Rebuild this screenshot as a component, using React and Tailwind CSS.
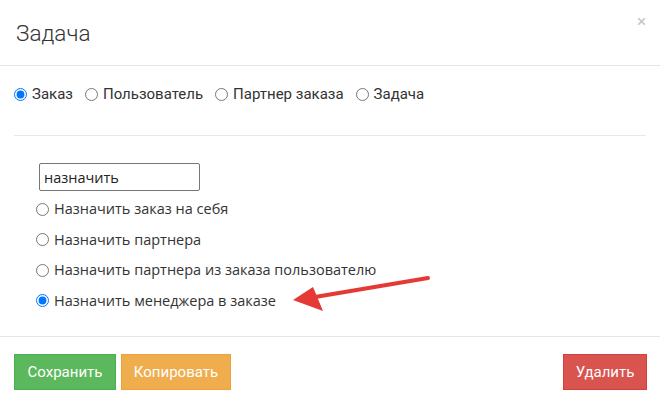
import { useState } from 'react';

const topOptions = ['Заказ', 'Пользователь', 'Партнер заказа', 'Задача'];
const actions = [
  'Назначить заказ на себя',
  'Назначить партнера',
  'Назначить партнера из заказа пользователю',
  'Назначить менеджера в заказе',
];

const App = () => {
  const [target, setTarget] = useState(0);
  const [action, setAction] = useState(3);
  const [text, setText] = useState('назначить');

  return (
    <div className="relative w-[660px] h-[405px] bg-white text-[#333] font-['Roboto',sans-serif]">
      {/* Шапка */}
      <div className="h-[66px] border-b border-[#e5e5e5] pl-[16px] pr-[14px] flex items-center justify-between">
        <h4 className="text-[22.5px] font-light leading-none pt-[1px]">Задача</h4>
        <button className="text-[#c4c4c4] text-[17px] leading-none -mt-[22px]">×</button>
      </div>

      <div className="px-[14px]">
        {/* Тип задачи */}
        <div className="h-[70px] flex items-center border-b border-[#e8e8e8] text-[15px] pb-[12px]">
          {topOptions.map((opt, i) => (
            <label key={opt} className="flex items-center mr-[12px] cursor-pointer">
              <input
                type="radio"
                name="target"
                checked={target === i}
                onChange={() => setTarget(i)}
                className="w-[13px] h-[13px] m-0 mr-[5px] accent-[#0075ff]"
              />
              {opt}
            </label>
          ))}
        </div>

        {/* Действие */}
        <div className="pt-[27px] pb-[20px] font-['Open_Sans',sans-serif] text-[14.5px]">
          <input
            value={text}
            onChange={e => setText(e.target.value)}
            className="ml-[25px] w-[161px] h-[28px] border border-[#767676] rounded-[2px] px-[4px] text-[14.5px] text-[#222] outline-none"
          />
          <div className="pl-[22px] mt-[3px]">
            {actions.map((a, i) => (
              <label key={a} className="h-[30.5px] flex items-center cursor-pointer">
                <input
                  type="radio"
                  name="action"
                  checked={action === i}
                  onChange={() => setAction(i)}
                  className="w-[13px] h-[13px] m-0 mr-[5px] accent-[#0075ff]"
                />
                {a}
              </label>
            ))}
          </div>
        </div>
      </div>

      {/* Кнопки */}
      <div className="border-t border-[#e5e5e5] pt-[17px] pl-[14px] pr-[13px] flex items-center text-[15px] text-white">
        <button className="h-[36px] w-[102px] bg-[#5cb85c] border border-[#4cae4c]">Сохранить</button>
        <button className="h-[36px] w-[110px] ml-[5px] bg-[#f0ad4e] border border-[#eea236]">Копировать</button>
        <button className="h-[36px] w-[84px] ml-auto bg-[#d9534f] border border-[#d43f3a]">Удалить</button>
      </div>

      {/* Стрелка */}
      <svg className="absolute left-[285px] top-[270px]" width="150" height="45" viewBox="0 0 150 45">
        <line x1="143" y1="8" x2="30" y2="27" stroke="#e53935" strokeWidth="4" strokeLinecap="round" />
        <polygon points="8,30 28,17 38,41" fill="#e53935" />
      </svg>
    </div>
  );
};

export default App;
